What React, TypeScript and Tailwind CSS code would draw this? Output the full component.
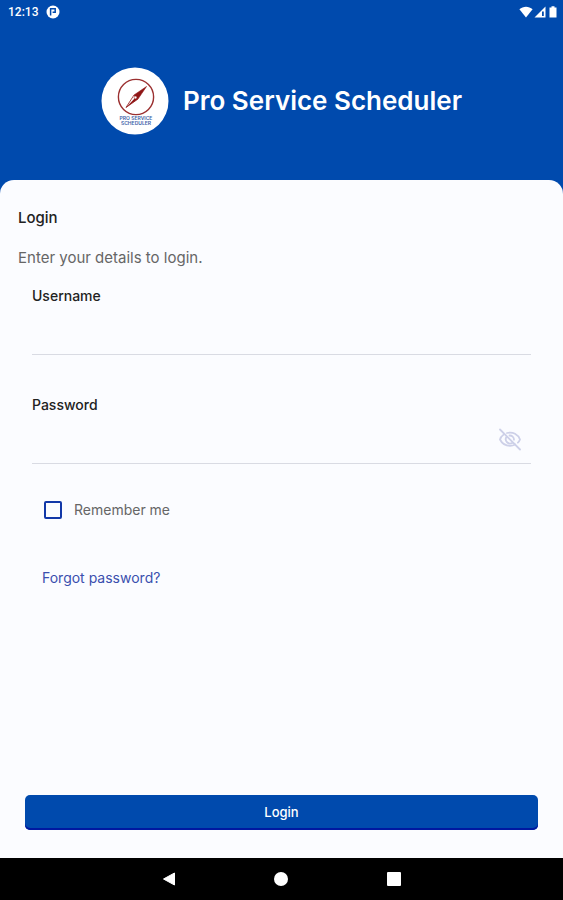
import { useState } from "react";

function StatusBar() {
  return (
    <div className="flex h-6 items-center justify-between pl-2 pr-1 text-white">
      <div className="flex items-center gap-2">
        <span className="font-[Roboto,sans-serif] text-xs font-medium">12:13</span>
        <svg viewBox="0 0 14 14" className="size-3.5" aria-hidden="true">
          <circle cx="7" cy="7" r="6.5" fill="#fff" />
          <path d="M4.6 10.6V3.8h4.6v3.4H6.6" fill="none" stroke="#004aad" strokeWidth="1.5" />
        </svg>
      </div>
      <div className="flex items-center gap-px">
        <svg viewBox="0 0 14 12" className="h-3 w-3.5" fill="#fff" aria-hidden="true">
          <path d="M0.4 3.2C4.2-0.2 9.8-0.2 13.6 3.2L7 11.6z" />
        </svg>
        <svg viewBox="0 0 12 12" className="size-3" aria-hidden="true">
          <path d="M0.5 11.5L11.5 0.5v11z" fill="#fff" />
          <path d="M8 5.500h1.800v4.500H8z" fill="#004aad" />
        </svg>
        <svg viewBox="0 0 12 12" className="size-3" fill="#fff" aria-hidden="true">
          <path d="M4.5 0.3h3v1.200h2v10h-7v-10h2z" />
        </svg>
      </div>
    </div>
  );
}

// logo boussole
function Logo() {
  return (
    <svg viewBox="0 0 68 68" className="size-17" aria-hidden="true">
      <circle cx="34" cy="34" r="33.5" fill="#fff" />
      <circle cx="35" cy="30" r="17.6" fill="none" stroke="#9b3030" strokeWidth="1.4" />
      <path d="M45.500 19.500L37 32L33 28z" fill="#8f1515" stroke="#8f1515" strokeWidth="0.6" />
      <path d="M25 40.500L33 28L37 32z" fill="#fff" stroke="#8f1515" strokeWidth="0.8" />
      <path d="M25 40.500L37 32L35 30z" fill="#8f1515" />
      <circle cx="34.500" cy="30.500" r="1.400" fill="#fff" stroke="#8f1515" strokeWidth="0.6" />
      <g fill="#3c62a8" fontFamily="Inter, sans-serif" fontSize="5" fontWeight="600" textAnchor="middle">
        <text x="35" y="53">PRO SERVICE</text>
        <text x="35" y="58">SCHEDULER</text>
      </g>
    </svg>
  );
}

function EyeOff() {
  return (
    <svg viewBox="0 0 24 24" className="size-6" fill="none" stroke="#cdd0e8" strokeWidth="1.8" strokeLinecap="round" aria-hidden="true">
      <path d="M2 2.500l20 20" />
      <path d="M5.600 7.600C3.700 9 2.300 10.700 2 12.500c2 4 5.700 6.300 10 6.300 1.900 0 3.700-.5 5.200-1.300" />
      <path d="M9 6C15 4.500 20 7.500 22 12.500c-.5 1.300-1.200 2.400-2.100 3.100" />
      <path d="M8.600 9.700a4.300 4.300 0 0 0 6 6" />
      <path d="M11.500 8.500a4.200 4.200 0 0 1 4.500 4.200" />
    </svg>
  );
}

function NavBar() {
  return (
    <nav className="grid h-[42px] grid-cols-5 items-center bg-black" aria-label="System">
      <button type="button" aria-label="Back" className="col-start-2 flex justify-center">
        <svg viewBox="0 0 14 14" className="size-3.5" fill="#fff">
          <path d="M12.500 1v12L1.500 7z" strokeLinejoin="round" stroke="#fff" />
        </svg>
      </button>
      <button type="button" aria-label="Home" className="flex justify-center">
        <span className="size-3.5 rounded-full bg-white" />
      </button>
      <button type="button" aria-label="Overview" className="flex justify-center">
        <span className="size-3.5 rounded-[1px] bg-white" />
      </button>
    </nav>
  );
}

export default function App() {
  const [visible, setVisible] = useState(false);

  return (
    <div className="flex min-h-screen flex-col bg-[#004aad] font-[Inter,sans-serif] text-sm">
      <StatusBar />
      <header className="flex h-39 items-center justify-center gap-3.5 pb-0.5">
        <Logo />
        <h1 className="text-[26px] font-semibold leading-8 text-white">Pro Service Scheduler</h1>
      </header>
      <main className="flex grow flex-col rounded-t-[14px] bg-[#fbfcff] pt-7">
        <form className="flex grow flex-col" onSubmit={(e) => e.preventDefault()}>
          <h2 className="px-[18px] text-[15px] font-medium leading-5 text-[#222]">Login</h2>
          <p className="mt-5 px-[18px] text-[15px] leading-5 text-[#666]">Enter your details to login.</p>
          <div className="mt-[18px] flex flex-col px-8">
            <label htmlFor="username" className="font-medium text-[#222]">
              Username
            </label>
            <input id="username" className="h-[49px] border-b border-[#d9dbe3] bg-transparent outline-none" />
            <label htmlFor="password" className="mt-10 font-medium text-[#222]">
              Password
            </label>
            <div className="flex h-[49px] items-center border-b border-[#d9dbe3] pr-[9px]">
              <input
                id="password"
                type={visible ? "text" : "password"}
                className="h-full min-w-0 grow bg-transparent outline-none"
              />
              <button type="button" aria-label="Show password" onClick={() => setVisible(!visible)}>
                <EyeOff />
              </button>
            </div>
          </div>
          <label className="mt-9 flex items-center gap-3 px-11 text-[#666]">
            <input type="checkbox" className="size-[18px] appearance-none rounded-xs border-2 border-[#1238a8] checked:bg-[#1238a8]" />
            Remember me
          </label>
          <a href="#" className="mt-12 self-start px-[42px] text-[#3a4fae]">
            Forgot password?
          </a>
          <button
            type="submit"
            className="mx-[25px] mb-7 mt-auto h-[35px] rounded-[5px] bg-[#004aad] text-[13px] font-medium text-white shadow-[inset_0_-2px_0_#0018a0]"
          >
            Login
          </button>
        </form>
      </main>
      <NavBar />
    </div>
  );
}
